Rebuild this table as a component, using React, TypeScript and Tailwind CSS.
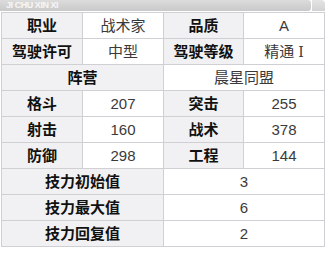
const label = "bg-[#f1f1f3] font-bold text-[#111] border border-[#cfcfd4] text-center";
const value = "bg-white text-[#3a3a3a] border border-[#cfcfd4] text-center";

function Row({ children }: { children: React.ReactNode }) {
  return <tr className="h-[26px]">{children}</tr>;
}

export default function App() {
  return (
    <div className="w-[327px] h-[253px] bg-white overflow-hidden" style={{ fontFamily: '"Liberation Sans", "Noto Sans CJK SC", sans-serif' }}>
      {/* title bar */}
      <div className="flex h-[11px]">
        <div className="w-[311px] rounded-r-[3px] bg-gradient-to-b from-[#dcdcdc] to-[#c9c9c9] flex items-center pl-[6px]">
          <span className="text-[9px] leading-none font-bold text-white/80 tracking-tighter">JI CHU XIN XI</span>
        </div>
        <div className="ml-px w-[13px] bg-gradient-to-b from-[#e4e4e4] to-[#d2d2d2] rounded-tr-[4px]" />
      </div>

      <table className="ml-px mt-px w-[324px] table-fixed border-collapse text-[15px] leading-none">
        <colgroup>
          <col className="w-[81px]" />
          <col className="w-[81px]" />
          <col className="w-[80px]" />
          <col className="w-[81px]" />
        </colgroup>
        <tbody>
          <Row>
            <td className={label}>职业</td>
            <td className={value}>战术家</td>
            <td className={label}>品质</td>
            <td className={value}>A</td>
          </Row>
          <Row>
            <td className={label}>驾驶许可</td>
            <td className={value}>中型</td>
            <td className={label}>驾驶等级</td>
            <td className={value}>
              精通 <span className="font-['DejaVu_Serif',serif] text-[14px]">Ⅰ</span>
            </td>
          </Row>
          <Row>
            <td colSpan={2} className={label}>阵营</td>
            <td colSpan={2} className={value}>晨星同盟</td>
          </Row>
          <Row>
            <td className={label}>格斗</td>
            <td className={value}>207</td>
            <td className={label}>突击</td>
            <td className={value}>255</td>
          </Row>
          <Row>
            <td className={label}>射击</td>
            <td className={value}>160</td>
            <td className={label}>战术</td>
            <td className={value}>378</td>
          </Row>
          <Row>
            <td className={label}>防御</td>
            <td className={value}>298</td>
            <td className={label}>工程</td>
            <td className={value}>144</td>
          </Row>
          <Row>
            <td colSpan={2} className={label}>技力初始值</td>
            <td colSpan={2} className={value}>3</td>
          </Row>
          <Row>
            <td colSpan={2} className={label}>技力最大值</td>
            <td colSpan={2} className={value}>6</td>
          </Row>
          <Row>
            <td colSpan={2} className={label}>技力回复值</td>
            <td colSpan={2} className={value}>2</td>
          </Row>
        </tbody>
      </table>
    </div>
  );
}
